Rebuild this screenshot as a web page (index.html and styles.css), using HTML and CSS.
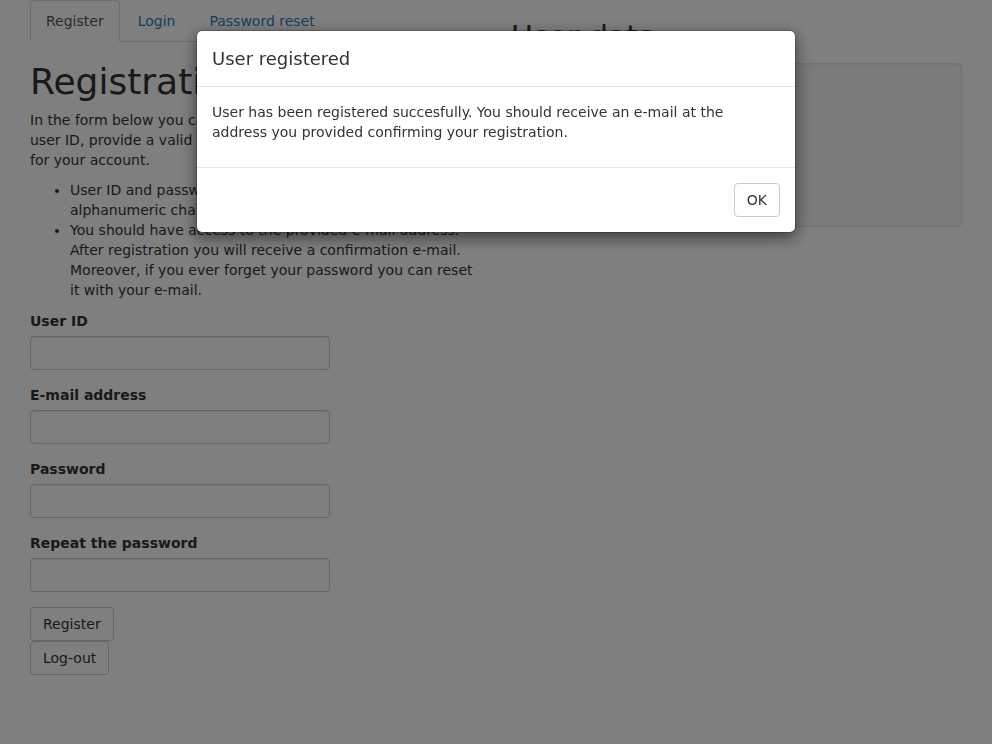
FILE: index.html
```html
<!DOCTYPE html>
<html lang="en">
<head>
<meta charset="utf-8">
<title>Registration</title>
<link rel="stylesheet" href="styles.css">
</head>
<body>
<div class="page">
  <div class="col">
    <ul class="tabs">
      <li class="tab active"><a href="#">Register</a></li>
      <li class="tab"><a href="#">Login</a></li>
      <li class="tab"><a href="#">Password reset</a></li>
    </ul>
    <h1 class="title">Registration</h1>
    <p class="intro">In the form below you can register a new account. Choose a user ID, provide a valid e-mail address and choose a password for your account.</p>
    <ul class="rules">
      <li>User ID and password should have between 4 and 20 alphanumeric characters.</li>
      <li>You should have access to the provided e-mail address. After registration you will receive a confirmation e-mail. Moreover, if you ever forget your password you can reset it with your e-mail.</li>
    </ul>
    <form class="form">
      <div class="group">
        <label class="label">User ID</label>
        <input class="input" type="text">
      </div>
      <div class="group">
        <label class="label">E-mail address</label>
        <input class="input" type="text">
      </div>
      <div class="group">
        <label class="label">Password</label>
        <input class="input" type="password">
      </div>
      <div class="group">
        <label class="label">Repeat the password</label>
        <input class="input" type="password">
      </div>
      <div class="actions">
        <button class="btn" type="button">Register</button>
        <button class="btn" type="button">Log-out</button>
      </div>
    </form>
  </div>
  <div class="col">
    <h2 class="subtitle">User data</h2>
    <div class="well"></div>
  </div>
</div>

<div class="backdrop"></div>
<div class="modal-wrap">
  <div class="modal">
    <div class="modal-header">
      <h4 class="modal-title">User registered</h4>
    </div>
    <div class="modal-body">
      <p>User has been registered succesfully. You should receive an e-mail at the address you provided confirming your registration.</p>
    </div>
    <div class="modal-footer">
      <button class="btn" type="button">OK</button>
    </div>
  </div>
</div>
</body>
</html>
```
FILE: styles.css
```css
* { box-sizing: border-box; }
html, body { margin: 0; padding: 0; }
body {
  font-family: "DejaVu Sans", sans-serif;
  font-size: 14px;
  line-height: 20px;
  color: #333;
  background: #fff;
  overflow: hidden;
}
.page {
  display: grid;
  grid-template-columns: 1fr 1fr;
  column-gap: 30px;
  padding: 0 30px;
}
.col { min-width: 0; }
.tabs {
  list-style: none;
  margin: 0;
  padding: 0;
  display: flex;
  border-bottom: 1px solid #ddd;
}
.tab { margin-bottom: -1px; margin-right: 2px; }
.tab a {
  display: block;
  padding: 10px 15px;
  border: 1px solid transparent;
  border-radius: 4px 4px 0 0;
  color: #337ab7;
  text-decoration: none;
  line-height: 20px;
}
.tab.active a {
  color: #555;
  background: #fff;
  border-color: #ddd #ddd transparent;
}
.title {
  font-size: 36px;
  font-weight: 500;
  line-height: 1.1;
  margin: 20px 0 8px;
}
.subtitle {
  font-size: 30px;
  font-weight: 500;
  line-height: 1.1;
  margin: 20px 0 10px;
}
.intro { margin: 0 0 10px; }
.rules { margin: 0 0 10px; padding-left: 40px; }
.form { padding-top: 1px; }
.group { margin-bottom: 15px; }
.label {
  display: block;
  font-weight: bold;
  margin-bottom: 5px;
}
.input {
  display: block;
  width: 300px;
  height: 34px;
  border: 1px solid #ccc;
  border-radius: 4px;
  box-shadow: inset 0 1px 1px rgba(0,0,0,.075);
  background: #fff;
  font: inherit;
  padding: 6px 12px;
}
.actions {
  display: flex;
  flex-direction: column;
  align-items: flex-start;
}
.btn {
  font: inherit;
  line-height: 20px;
  padding: 6px 12px;
  color: #333;
  background: #fff;
  border: 1px solid #ccc;
  border-radius: 4px;
  height: 34px;
  cursor: pointer;
}
.well {
  min-height: 164px;
  padding: 19px;
  background: #f5f5f5;
  border: 1px solid #e3e3e3;
  border-radius: 4px;
  box-shadow: inset 0 1px 1px rgba(0,0,0,.05);
}
.backdrop {
  position: fixed;
  inset: 0;
  background: #000;
  opacity: .5;
}
.modal-wrap {
  position: fixed;
  inset: 0;
  display: flex;
  justify-content: center;
  align-items: flex-start;
  padding-top: 30px;
}
.modal {
  width: 600px;
  background: #fff;
  border: 1px solid rgba(0,0,0,.2);
  border-radius: 6px;
  box-shadow: 0 5px 15px rgba(0,0,0,.5);
  background-clip: padding-box;
}
.modal-header {
  padding: 15px;
  border-bottom: 1px solid #e5e5e5;
}
.modal-title {
  margin: 0;
  font-size: 18px;
  font-weight: 500;
  line-height: 25px;
}
.modal-body { padding: 15px 15px 15px; }
.modal-body p { margin: 0 0 10px; }
.modal-footer {
  padding: 15px;
  border-top: 1px solid #e5e5e5;
  display: flex;
  justify-content: flex-end;
}
```
